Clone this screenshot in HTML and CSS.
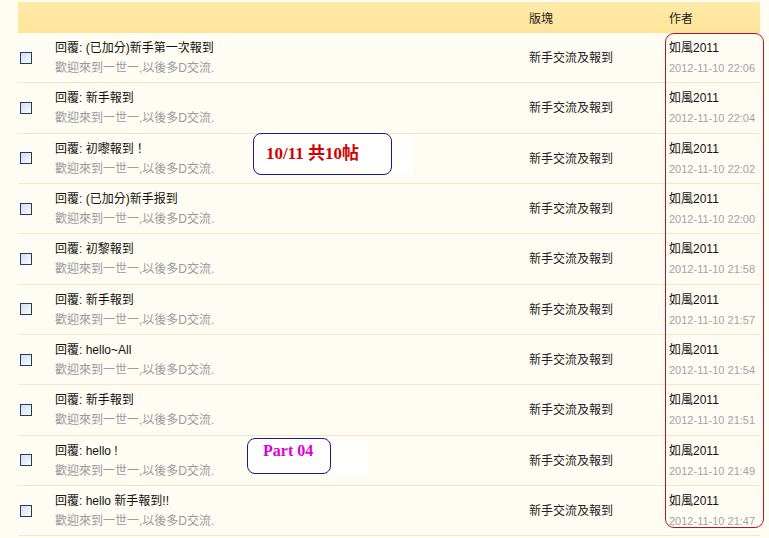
FILE: index.html
```html
<!DOCTYPE html>
<html lang="zh-Hant">
<head>
<meta charset="utf-8">
<title>回覆列表</title>
<link rel="stylesheet" href="styles.css">
</head>
<body>
<div class="page">
  <div class="list">
    <div class="head">
      <div></div>
      <div></div>
      <div>版塊</div>
      <div>作者</div>
    </div>
    <div class="row"><div class="cb"><span class="box"></span></div><div class="t"><div class="title">回覆: (已加分)新手第一次報到</div><div class="sub">歡迎來到一世一,以後多D交流.</div></div><div class="forum">新手交流及報到</div><div class="au"><div class="name">如風2011</div><div class="date">2012-11-10 22:06</div></div></div>
    <div class="row"><div class="cb"><span class="box"></span></div><div class="t"><div class="title">回覆: 新手報到</div><div class="sub">歡迎來到一世一,以後多D交流.</div></div><div class="forum">新手交流及報到</div><div class="au"><div class="name">如風2011</div><div class="date">2012-11-10 22:04</div></div></div>
    <div class="row"><div class="cb"><span class="box"></span></div><div class="t"><div class="title">回覆: 初嚟報到！</div><div class="sub">歡迎來到一世一,以後多D交流.</div></div><div class="forum">新手交流及報到</div><div class="au"><div class="name">如風2011</div><div class="date">2012-11-10 22:02</div></div></div>
    <div class="row"><div class="cb"><span class="box"></span></div><div class="t"><div class="title">回覆: (已加分)新手报到</div><div class="sub">歡迎來到一世一,以後多D交流.</div></div><div class="forum">新手交流及報到</div><div class="au"><div class="name">如風2011</div><div class="date">2012-11-10 22:00</div></div></div>
    <div class="row"><div class="cb"><span class="box"></span></div><div class="t"><div class="title">回覆: 初黎報到</div><div class="sub">歡迎來到一世一,以後多D交流.</div></div><div class="forum">新手交流及報到</div><div class="au"><div class="name">如風2011</div><div class="date">2012-11-10 21:58</div></div></div>
    <div class="row"><div class="cb"><span class="box"></span></div><div class="t"><div class="title">回覆: 新手報到</div><div class="sub">歡迎來到一世一,以後多D交流.</div></div><div class="forum">新手交流及報到</div><div class="au"><div class="name">如風2011</div><div class="date">2012-11-10 21:57</div></div></div>
    <div class="row"><div class="cb"><span class="box"></span></div><div class="t"><div class="title">回覆: hello~All</div><div class="sub">歡迎來到一世一,以後多D交流.</div></div><div class="forum">新手交流及報到</div><div class="au"><div class="name">如風2011</div><div class="date">2012-11-10 21:54</div></div></div>
    <div class="row"><div class="cb"><span class="box"></span></div><div class="t"><div class="title">回覆: 新手報到</div><div class="sub">歡迎來到一世一,以後多D交流.</div></div><div class="forum">新手交流及報到</div><div class="au"><div class="name">如風2011</div><div class="date">2012-11-10 21:51</div></div></div>
    <div class="row"><div class="cb"><span class="box"></span></div><div class="t"><div class="title">回覆: hello !</div><div class="sub">歡迎來到一世一,以後多D交流.</div></div><div class="forum">新手交流及報到</div><div class="au"><div class="name">如風2011</div><div class="date">2012-11-10 21:49</div></div></div>
    <div class="row"><div class="cb"><span class="box"></span></div><div class="t"><div class="title">回覆: hello 新手報到!!</div><div class="sub">歡迎來到一世一,以後多D交流.</div></div><div class="forum">新手交流及報到</div><div class="au"><div class="name">如風2011</div><div class="date">2012-11-10 21:47</div></div></div>
  </div>

  <div class="redbox"></div>
  <div class="note note1"><span class="n1">10/11 共10帖</span></div>
  <div class="pad pad1"></div>
  <div class="note note2"><span class="n2">Part 04</span></div>
  <div class="pad pad2"></div>
</div>
</body>
</html>
```

FILE: styles.css
```css
html, body {
  margin: 0;
  padding: 0;
  background: #fffdf3;
}
body {
  width: 769px;
  height: 538px;
  overflow: hidden;
  font-family: "Liberation Sans", "Noto Sans CJK TC", sans-serif;
  font-size: 12px;
  color: #1a1a1a;
}
.page {
  position: relative;
  width: 769px;
  height: 538px;
}
.list {
  margin-left: 18px;
  padding-top: 2px;
  width: 742px;
}
.head, .row {
  display: grid;
  grid-template-columns: 37px 474px 140px 91px;
  align-items: center;
}
.head {
  height: 31px;
  background: linear-gradient(#ffeaa8, #ffe49a);
  color: #222;
}
.row {
  height: 49.33px;
  border-bottom: 1px solid #f2e9cc;
}
.cb {
  padding-left: 2px;
  display: flex;
  align-items: center;
}
.box {
  display: block;
  width: 10px;
  height: 10px;
  border: 1px solid #1f3e62;
  background: linear-gradient(135deg, #d4dde8, #fafcfe);
}
.t, .au {
  display: flex;
  flex-direction: column;
  line-height: 20px;
  padding-top: 1px;
}
.title { color: #111; }
.sub { color: #9a9a9a; }
.forum { color: #222; padding-bottom: 2px; }
.name { color: #111; }
.date {
  color: #a3a3a3;
  font-size: 11px;
}
.redbox {
  position: absolute;
  left: 665px;
  top: 33px;
  width: 97px;
  height: 493px;
  border: 1px solid #b0142a;
  border-radius: 9px;
}
.note {
  position: absolute;
  background: #ffffff;
  border: 1px solid #1c1a8c;
  border-radius: 8px;
  box-sizing: border-box;
  font-family: "Liberation Serif", "Noto Sans CJK TC", serif;
  font-weight: bold;
}
.note1 {
  left: 253px;
  top: 133px;
  width: 139px;
  height: 42px;
  padding: 10px 0 0 12px;
  font-size: 17px;
  line-height: 20px;
  color: #d40000;
}
.note2 {
  left: 247px;
  top: 438px;
  width: 84px;
  height: 36px;
  padding: 3px 0 0 15px;
  font-size: 16px;
  line-height: 18px;
  color: #e000d6;
}
.pad {
  position: absolute;
  background: #fffffb;
}
.pad1 {
  left: 392px;
  top: 134px;
  width: 21px;
  height: 40px;
}
.pad2 {
  left: 331px;
  top: 440px;
  width: 37px;
  height: 35px;
}
```
